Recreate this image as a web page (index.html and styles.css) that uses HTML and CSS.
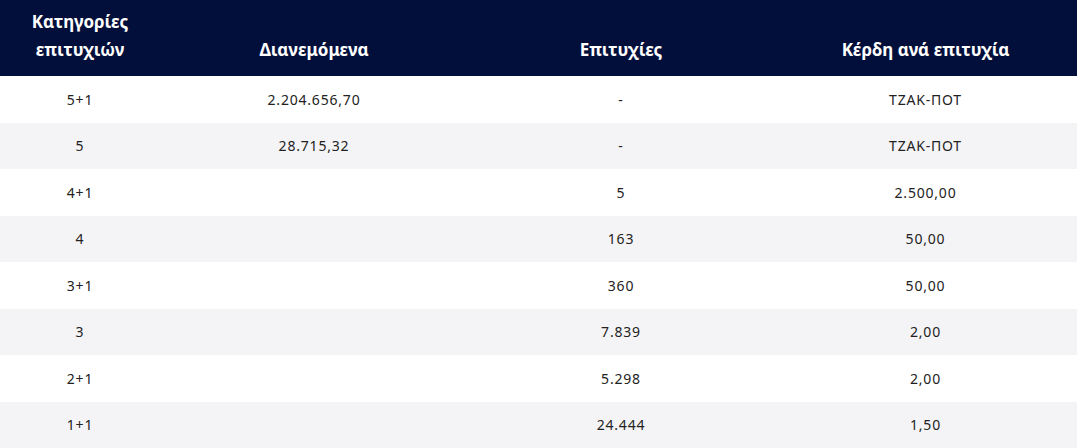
FILE: index.html
```html
<!DOCTYPE html>
<html lang="el">
<head>
<meta charset="utf-8">
<title>Κατηγορίες επιτυχιών</title>
<link rel="stylesheet" href="styles.css">
</head>
<body>
<table class="results">
  <colgroup>
    <col class="c1"><col class="c2"><col class="c3"><col class="c4">
  </colgroup>
  <thead>
    <tr>
      <th>Κατηγορίες επιτυχιών</th>
      <th>Διανεμόμενα</th>
      <th>Επιτυχίες</th>
      <th>Κέρδη ανά επιτυχία</th>
    </tr>
  </thead>
  <tbody>
    <tr><td>5+1</td><td>2.204.656,70</td><td>-</td><td>ΤΖΑΚ-ΠΟΤ</td></tr>
    <tr><td>5</td><td>28.715,32</td><td>-</td><td>ΤΖΑΚ-ΠΟΤ</td></tr>
    <tr><td>4+1</td><td></td><td>5</td><td>2.500,00</td></tr>
    <tr><td>4</td><td></td><td>163</td><td>50,00</td></tr>
    <tr><td>3+1</td><td></td><td>360</td><td>50,00</td></tr>
    <tr><td>3</td><td></td><td>7.839</td><td>2,00</td></tr>
    <tr><td>2+1</td><td></td><td>5.298</td><td>2,00</td></tr>
    <tr><td>1+1</td><td></td><td>24.444</td><td>1,50</td></tr>
  </tbody>
</table>
</body>
</html>
```
FILE: styles.css
```css
html, body {
  margin: 0;
  padding: 0;
  background: #ffffff;
}
body {
  font-family: "Noto Sans", "Open Sans", sans-serif;
}
.results {
  width: 100%;
  border-collapse: collapse;
  table-layout: fixed;
}
.c1 { width: 160px; }
.c2 { width: 308px; }
.c3 { width: 306px; }
.c4 { width: auto; }
.results thead th {
  background: #030f3b;
  color: #ffffff;
  font-size: 17px;
  font-weight: 700;
  line-height: 28px;
  height: 76px;
  box-sizing: border-box;
  padding: 6px 12px 12px;
  vertical-align: bottom;
  text-align: center;
}
.results tbody td {
  height: 46.5px;
  padding: 0 16px;
  box-sizing: border-box;
  text-align: center;
  vertical-align: middle;
  font-size: 14px;
  color: #222222;
  letter-spacing: 0.8px;
}
.results tbody tr:nth-child(even) td {
  background: #f4f4f6;
}
```
